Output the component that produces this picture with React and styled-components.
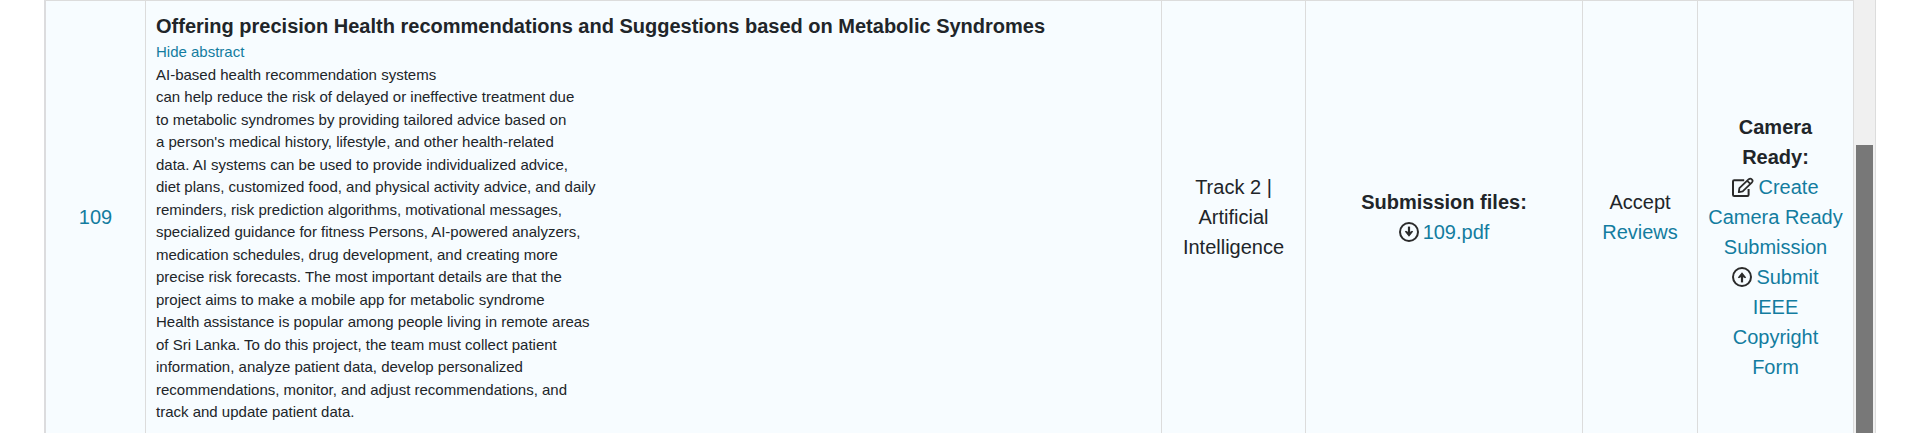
import React from "react";
import styled, { createGlobalStyle } from "styled-components";

const Global = createGlobalStyle`
  * { box-sizing: border-box; }
  body {
    margin: 0;
    background: #fff;
    color: #212529;
    font: 20px/1.5 "Liberation Sans", Arial, sans-serif;
  }
`;

const Console = styled.main`
  display: flex;
  height: 100vh;
  margin: 0 44px;
  overflow: hidden;
  border-left: 2px solid #dcdcde;
  border-right: 1px solid #dcdcdc;
`;

const ScrollTrack = styled.div`
  flex: none;
  width: 21px;
  height: 100%;
  padding: 145px 2px 0;
  background: #f0f0f0;
`;

const ScrollThumb = styled.div`
  width: 17px;
  height: 100%;
  background: #787878;
`;

const Table = styled.table`
  flex: 1;
  align-self: flex-start;
  min-width: 0;
  table-layout: fixed;
  border-collapse: separate;
  border-spacing: 0;
  background: #f7fcff;
`;

const Col = styled.col`
  width: ${(p) => (p.$width ? `${p.$width}px` : "auto")};
`;

const Cell = styled.td`
  padding: 10px;
  border-top: 1px solid #dcdcdc;
  border-right: 1px solid #dcdcdc;
  text-align: ${(p) => (p.$align || "center")};
  vertical-align: ${(p) => (p.$align ? "top" : "middle")};
`;

const ActionCell = styled(Cell)`
  padding-top: 70px;
`;

const Link = styled.a`
  color: #137c9f;
  text-decoration: none;
`;

const Strong = styled.strong`
  display: block;
`;

const Small = styled.div`
  font-size: 15px;
  white-space: pre-line;
`;

const Glyph = styled.svg`
  width: ${(p) => p.$width}px;
  height: 20px;
  margin-right: 4px;
  vertical-align: -3px;
  fill: none;
  stroke: #2b2b2b;
  stroke-width: 2;
`;

const CircleArrow = ({ up }) => (
  <Glyph $width={20} viewBox="0 0 20 20" aria-hidden="true">
    <circle cx="10" cy="10" r="9" />
    <g transform={up ? "rotate(180 10 10)" : undefined}>
      <path d="M10 4.6v8" strokeWidth="2.2" />
      <path d="M5.8 9.6l1.2-.8 3 1.6 3-1.6 1.2.8L10 14.8z" fill="#2b2b2b" stroke="none" />
    </g>
  </Glyph>
);

const EditIcon = () => (
  <Glyph $width={22} viewBox="0 0 22 20" strokeLinejoin="round" aria-hidden="true">
    <path d="M12.2 3.2H2.2Q1 3.2 1 4.4v13.4Q1 19 2.2 19h13.2q1.2 0 1.2-1.2V12" />
    <path strokeWidth="1.8" d="M6.8 15.2l.6-4 9.4-9q1.5-1.3 3 .1t.2 3l-9.3 9zM15.2 3.8l3.2 3" />
  </Glyph>
);

const abstract = `AI-based health recommendation systems
can help reduce the risk of delayed or ineffective treatment due
to metabolic syndromes by providing tailored advice based on
a person's medical history, lifestyle, and other health-related
data. AI systems can be used to provide individualized advice,
diet plans, customized food, and physical activity advice, and daily
reminders, risk prediction algorithms, motivational messages,
specialized guidance for fitness Persons, AI-powered analyzers,
medication schedules, drug development, and creating more
precise risk forecasts. The most important details are that the
project aims to make a mobile app for metabolic syndrome
Health assistance is popular among people living in remote areas
of Sri Lanka. To do this project, the team must collect patient
information, analyze patient data, develop personalized
recommendations, monitor, and adjust recommendations, and
track and update patient data.`;

export default function App() {
  return (
    <>
      <Global />
      <Console>
        <Table>
          <colgroup>
            <Col $width={100} />
            <Col />
            <Col $width={144} />
            <Col $width={277} />
            <Col $width={115} />
            <Col $width={156} />
          </colgroup>
          <tbody>
            <tr>
              <Cell><Link href="#109">109</Link></Cell>
              <Cell $align="left">
                <Strong>
                  Offering precision Health recommendations and Suggestions based on Metabolic Syndromes
                </Strong>
                <Small><Link href="#abstract">Hide abstract</Link></Small>
                <Small>{abstract}</Small>
              </Cell>
              <Cell>Track 2 | Artificial Intelligence</Cell>
              <Cell>
                <Strong>Submission files:</Strong>
                <CircleArrow />
                <Link href="#pdf">109.pdf</Link>
              </Cell>
              <Cell>
                <div>Accept</div>
                <Link href="#reviews">Reviews</Link>
              </Cell>
              <ActionCell>
                <Strong>Camera Ready:</Strong>
                <div>
                  <EditIcon />
                  <Link href="#camera-ready">Create Camera Ready Submission</Link>
                </div>
                <div>
                  <CircleArrow up />
                  <Link href="#copyright">Submit IEEE Copyright Form</Link>
                </div>
              </ActionCell>
            </tr>
          </tbody>
        </Table>
        <ScrollTrack><ScrollThumb /></ScrollTrack>
      </Console>
    </>
  );
}
